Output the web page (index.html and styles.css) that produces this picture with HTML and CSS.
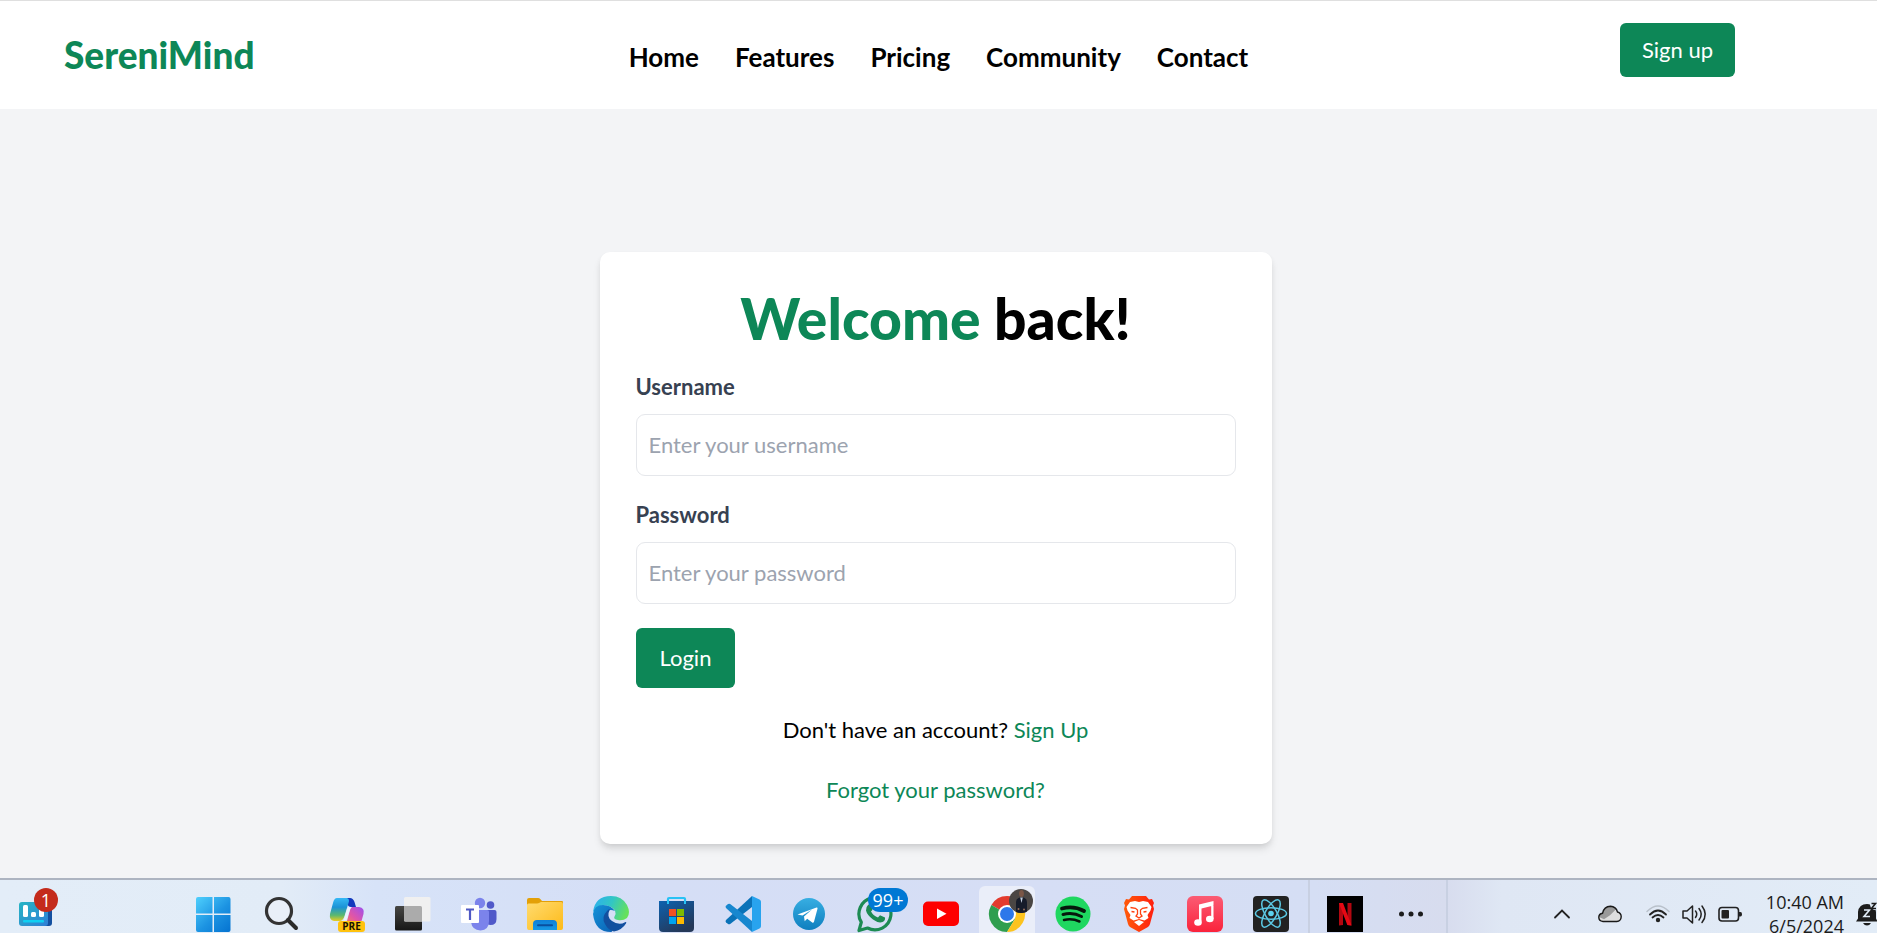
FILE: index.html
```html
<!DOCTYPE html>
<html lang="en">
<head>
<meta charset="utf-8">
<meta name="viewport" content="width=device-width, initial-scale=1">
<title>SereniMind</title>
<link rel="stylesheet" href="styles.css">
</head>
<body>
<header class="header">
  <a class="brand" href="#">SereniMind</a>
  <nav class="nav">
    <a href="#">Home</a>
    <a href="#">Features</a>
    <a href="#">Pricing</a>
    <a href="#">Community</a>
    <a href="#">Contact</a>
  </nav>
  <button class="btn btn-signup" type="button">Sign up</button>
</header>

<main class="main">
  <section class="card">
    <h1 class="title"><span class="accent">Welcome</span> back!</h1>
    <form class="form">
      <div class="field">
        <label for="username">Username</label>
        <input id="username" type="text" placeholder="Enter your username">
      </div>
      <div class="field">
        <label for="password">Password</label>
        <input id="password" type="password" placeholder="Enter your password">
      </div>
      <button class="btn btn-login" type="button">Login</button>
    </form>
    <p class="note">Don't have an account? <a href="#">Sign Up</a></p>
    <p class="note"><a href="#">Forgot your password?</a></p>
  </section>
</main>

<footer class="taskbar">
  <div class="widgets">
    <span class="icon-wrap">
      <svg width="36" height="36" viewBox="0 0 36 36">
        <defs><linearGradient id="wg" x1="0" y1="0" x2="1" y2="1"><stop offset="0" stop-color="#27b5c4"/><stop offset="1" stop-color="#2f7fd6"/></linearGradient></defs>
        <rect x="22" y="6" width="12" height="24" rx="3" fill="#1450a0"/>
        <rect x="1" y="6" width="29" height="24" rx="3" fill="url(#wg)"/>
        <rect x="5" y="9" width="5" height="12" rx="1.5" fill="#fff"/><rect x="13" y="16" width="5" height="5" rx="1.5" fill="#fff"/><rect x="21" y="11" width="5" height="10" rx="1.5" fill="#fff"/>
        <rect x="5" y="24" width="21" height="2.4" rx="1" fill="#0fd0f2"/>
      </svg>
      <span class="badge badge-red">1</span>
    </span>
  </div>

  <ul class="apps">
    <li><svg width="36" height="36" viewBox="0 0 36 36">
      <defs><linearGradient id="win" gradientUnits="userSpaceOnUse" x1="0" y1="0" x2="34" y2="36"><stop offset="0" stop-color="#4fd0fd"/><stop offset=".55" stop-color="#1c93e2"/><stop offset="1" stop-color="#0472d0"/></linearGradient></defs>
      <path fill="url(#win)" d="M1 1h14.5v16.500H-1V3Q-1 1 1 1zM17 1h14.500q2 0 2 2v14.500H17zM-1 19h16.500v17H1q-2 0-2-2zM17 19h16.500v15q0 2-2 2H17z"/></svg></li>
    <li><svg width="36" height="36" viewBox="0 0 36 36"><circle cx="16" cy="15" r="12.500" fill="#e9eff8" stroke="#333" stroke-width="3.200"/><path d="M25 24l8 8" stroke="#2a2a2a" stroke-width="4" stroke-linecap="round"/></svg></li>
    <li><span class="icon-wrap"><svg width="36" height="36" viewBox="0 0 36 36">
      <defs>
        <linearGradient id="cp1" x1="0" y1="0" x2="0" y2="1"><stop offset="0" stop-color="#35b8f5"/><stop offset=".4" stop-color="#1b93d6"/><stop offset=".75" stop-color="#5bb870"/><stop offset="1" stop-color="#e9cc22"/></linearGradient>
        <linearGradient id="cp2" x1="1" y1="0" x2="0" y2="1"><stop offset="0" stop-color="#9b50f0"/><stop offset=".5" stop-color="#e055a8"/><stop offset="1" stop-color="#fb8a4a"/></linearGradient>
      </defs>
      <path d="M16 2h5q3 0 4.500 4l1.500 5h-5q-3 0-4-4z" fill="#1239bd"/>
      <path d="M8 2h10q3 1 1.500 5l-4 13q-1.500 5-5 5H5q-5-1-4-7L4 7q1.200-5 4-5z" fill="url(#cp1)"/>
      <path d="M22 11h8q6 1 4.500 7l-2 7q-1 4-5 5H14q3-1 4-5l3-11q.500-3 1-3z" fill="url(#cp2)"/>
      <path d="M18 13q1-2 3-2h2q-1.500 1-2.500 4l-3 9-3 1z" fill="#edf3ff"/></svg><span class="pre">PRE</span></span></li>
    <li><svg width="36" height="36" viewBox="0 0 36 36">
      <defs><linearGradient id="tv" x1="0" y1="0" x2="0" y2="1"><stop offset="0" stop-color="#464644"/><stop offset="1" stop-color="#171717"/></linearGradient></defs>
      <rect x="0" y="10" width="27" height="24.500" rx="1.500" fill="url(#tv)"/><rect x="9" y="1" width="26.500" height="24.500" rx="1.500" fill="#f0f0f0"/><path d="M9 10h16.500q1.500 0 1.500 1.500v14H10.500Q9 25.500 9 24z" fill="#ababab"/></svg></li>
    <li><svg width="36" height="36" viewBox="0 0 36 36">
      <circle cx="29.500" cy="9" r="3.800" fill="#5059c9"/><path d="M26 14h7.500q2 0 2 2v7q0 6-6 6-3.500 0-5-3z" fill="#5059c9"/>
      <circle cx="19" cy="7" r="5.200" fill="#7b83eb"/><path d="M10 14h16q2 0 2 2v9q0 9-8.500 9.500Q11 34 10 26z" fill="#7b83eb"/>
      <rect x="0" y="9" width="18" height="18" rx="1" fill="#fff"/><path d="M5 13.500h8M9 13.500V24" stroke="#4f58c4" stroke-width="2.200"/></svg></li>
    <li><svg width="36" height="36" viewBox="0 0 36 36">
      <defs><linearGradient id="fo" x1="0" y1="0" x2="1" y2="1"><stop offset="0" stop-color="#ffdb70"/><stop offset="1" stop-color="#fdba18"/></linearGradient><linearGradient id="fb" x1="0" y1="0" x2="0" y2="1"><stop offset="0" stop-color="#0f7fd7"/><stop offset="1" stop-color="#1698e4"/></linearGradient></defs>
      <path d="M0 4q0-2 2-2h9q1.500 0 2.500 1.200L15 5h20q1 0 1 1v8H0z" fill="#e3a008"/>
      <path d="M0 9q0-1.500 1.500-1.500H10q1.500 0 2.500-.800L14 6h20q2 0 2 2v24q0 2-2 2H2q-2 0-2-2z" fill="url(#fo)"/>
      <path d="M6 34v-6q0-4 4-4h16q4 0 4 4v6z" fill="url(#fb)"/><path d="M11 29.200h14" stroke="#0a4f9e" stroke-width="2" stroke-linecap="round"/></svg></li>
    <li><svg width="36" height="36" viewBox="0 0 36 36">
      <defs><linearGradient id="e1" x1="0" y1=".2" x2="1" y2=".5"><stop offset="0" stop-color="#2cb0ee"/><stop offset=".5" stop-color="#32c6c4"/><stop offset="1" stop-color="#66e15a"/></linearGradient>
      <linearGradient id="e2" x1="0" y1="0" x2="1" y2="1"><stop offset="0" stop-color="#1593d8"/><stop offset="1" stop-color="#0a5fb4"/></linearGradient></defs>
      <path d="M0 16Q2 0 18 0q11 0 16 9 4 8 0 13-4 3-9 2-5-1-3.500-3.500Q25 15 18 11 8 6 0 16z" fill="url(#e1)"/>
      <path d="M0 18Q1 9 10 9q8 0 12 6-7-3-9 3-2 9 6 15 1 3-1 3Q2 36 0 18z" fill="url(#e2)"/>
      <path d="M14 15q-6 6-2 13 3 6 9 7.500 8-1.500 12-8 1-2-1-1.200Q26 30 19 25q-6-4-2-12-2 .500-3 2z" fill="#124f9f"/></svg></li>
    <li><svg width="36" height="36" viewBox="0 0 36 36">
      <defs><linearGradient id="st" x1="0" y1="0" x2=".6" y2="1"><stop offset="0" stop-color="#0d62b0"/><stop offset="1" stop-color="#253858"/></linearGradient></defs>
      <path d="M9 7V3q0-1 1-1h15q1 0 1 1v4" fill="none" stroke="#28c2f5" stroke-width="2.200"/>
      <path d="M0 5h35v27q0 4-4 4H4q-4 0-4-4z" fill="url(#st)"/><path d="M9 5v3M26 5v3" stroke="#28c2f5" stroke-width="2"/>
      <path fill="#f25022" d="M10 13h7v7h-7z"/><path fill="#7fba00" d="M18 13h7v7h-7z"/><path fill="#00a4ef" d="M10 21h7v7h-7z"/><path fill="#ffb900" d="M18 21h7v7h-7z"/></svg></li>
    <li><svg width="36" height="36" viewBox="0 0 36 36">
      <path d="M27 0L1 24q-1 1.200 0 2.200l2 1.800q1.200.600 2.200 0L27 11z" fill="#0a72b8"/>
      <path d="M27 36L1 12q-1-1.200 0-2.200L3 8q1.200-.600 2.200 0L27 25z" fill="#1787cf"/>
      <path d="M27 0l7.500 3.500q1.500.700 1.500 2.300v24.400q0 1.600-1.500 2.300L27 36z" fill="#28a3ee"/></svg></li>
    <li><svg width="36" height="36" viewBox="0 0 36 36">
      <defs><linearGradient id="tg" x1="0" y1="0" x2="0" y2="1"><stop offset="0" stop-color="#37aee2"/><stop offset="1" stop-color="#0f7fbf"/></linearGradient></defs>
      <circle cx="18" cy="18" r="16" fill="url(#tg)"/><path d="M6.500 18.500l19-7q1.300-.300 1 1.200l-3.500 13q-.600 1.500-1.800.700l-5-3.700-2.500 2.600-.700-4.700 8-7-9.500 5.800z" fill="#fff"/></svg></li>
    <li><span class="icon-wrap"><svg width="36" height="36" viewBox="0 0 36 36">
      <path d="M2 34.500l2.300-8.300A16 16 0 1 1 10.500 32z" fill="none" stroke="#1d8b53" stroke-width="3.200" stroke-linejoin="round"/>
      <path d="M11 9q1-1 2.500-.500l2 4.500q0 1-1.500 2.500 2.500 4.500 7 6l2-2.300 5 2.300q.500 3-2.500 4.500-4 1.500-9.500-2.500-6-4.500-7-9-.300-3.500 2-5.500z" fill="#1d8b53"/></svg><span class="badge badge-blue">99+</span></span></li>
    <li><svg width="36" height="36" viewBox="0 0 36 36"><rect x="0" y="5.500" width="36" height="24.500" rx="5" fill="#fe0000"/><path d="M14 12.500l9.500 5.300-9.500 5.300z" fill="#fff"/></svg></li>
    <li><span class="tile"><span class="icon-wrap"><svg width="36" height="36" viewBox="0 0 36 36">
      <path d="M18 18L2.400 9A18 18 0 0 1 33.600 9z" fill="#e33b2e"/><path d="M18 18L2.400 9A18 18 0 0 0 18 36l8-13z" fill="#2f9e4f"/><path d="M18 9h15.600A18 18 0 0 1 18 36l8-13z" fill="#fcc31e"/>
      <circle cx="18" cy="18" r="9" fill="#fff"/><circle cx="18" cy="18" r="7" fill="#2c78ea"/></svg>
      <svg class="avatar" width="24" height="24" viewBox="0 0 24 24"><defs><clipPath id="av"><circle cx="12" cy="12" r="12"/></clipPath></defs><g clip-path="url(#av)"><path fill="#4a4644" d="M0 0h24v24H0z"/><path d="M7 24V13q0-3 2.500-4l3-1 3 1q2.500 1 2.500 4v11z" fill="#161c2a"/><ellipse cx="12.500" cy="4.500" rx="2.400" ry="3.600" fill="#7a5646"/><path d="M11.200 8.500l1.300 5.500 1.300-5.500z" fill="#c3cfe0"/><circle cx="9.500" cy="20" r="1" fill="#96705f"/><circle cx="15" cy="20.500" r="1" fill="#96705f"/></g></svg></span></span></li>
    <li><svg width="36" height="36" viewBox="0 0 36 36"><circle cx="18" cy="18" r="17.500" fill="#1fd760"/><g fill="none" stroke="#06170c" stroke-linecap="round"><path d="M7 12.500q12-3 22 2.500" stroke-width="3.800"/><path d="M8 18.500q10-2.500 18.500 2" stroke-width="3"/><path d="M9 24q8-2 15.500 1.500" stroke-width="2.500"/></g></svg></li>
    <li><svg width="36" height="36" viewBox="0 0 36 36">
      <defs><linearGradient id="br"><stop offset="0" stop-color="#ff5a0a"/><stop offset="1" stop-color="#ff2010"/></linearGradient></defs>
      <path d="M11 0h14l3 3.500 3-.500 2 4-1 2.500 1 3.500-4 15q-.600 2-2 3L18 36l-9-5q-1.400-1-2-3L3 13l1-3.500L3 7l2-4 3 .500z" fill="url(#br)"/>
      <path d="M18 6l4-1 5 1 3.500 5-1 3.500-3 4.500 1 3-4 2.500-5.500-1.500-5.500 1.500-4-2.500 1-3-3-4.500-1-3.500L9 6l5-1z" fill="#fff"/>
      <path d="M13 26l5-2 5 2-5 4z" fill="#fff"/>
      <path d="M9.500 11.500l5 .800L16.500 14v4l-1.500 2 3 2 3-2-1.500-2v-4l2-1.700 5-.800M10.500 15.500l3 .5M25.500 15.500l-3 .5" fill="none" stroke="#ff4010" stroke-width="1.300"/></svg></li>
    <li><svg width="36" height="36" viewBox="0 0 36 36">
      <defs><linearGradient id="mu" x1="0" y1="0" x2="0" y2="1"><stop offset="0" stop-color="#fb5c74"/><stop offset="1" stop-color="#fa233b"/></linearGradient></defs>
      <rect width="36" height="36" rx="6" fill="url(#mu)"/><path d="M12 8.500L26.500 5v4.500L14.500 12.500v13H12zM24.200 7h2.300v16h-2.300z" fill="#fff"/><ellipse cx="11" cy="26.500" rx="3.800" ry="3.200" fill="#fff"/><ellipse cx="22.800" cy="23" rx="3.800" ry="3.200" fill="#fff"/></svg></li>
    <li><svg width="36" height="36" viewBox="0 0 36 36"><rect width="36" height="36" rx="4" fill="#222"/><g fill="none" stroke="#5cc9e4" stroke-width="1.500"><ellipse cx="18" cy="17.500" rx="15.500" ry="5.800"/><ellipse cx="18" cy="17.500" rx="15.500" ry="5.800" transform="rotate(60 18 17.500)"/><ellipse cx="18" cy="17.500" rx="15.500" ry="5.800" transform="rotate(120 18 17.500)"/></g><circle cx="18" cy="17.500" r="2.800" fill="#5cd3ee"/></svg></li>
  </ul>
  <ul class="apps apps-extra">
    <li><svg width="36" height="36" viewBox="0 0 36 36"><path d="M0 0h36v36H0z"/><path d="M12 7h4v22l-4 .500zM20.500 7h4v22.500l-4-.500z" fill="#b20710"/><path d="M12 7h4l8.500 22.500-4.200-.500z" fill="#e50914"/></svg></li>
    <li><svg width="36" height="36" viewBox="0 0 36 36"><g fill="#1c1c1c"><circle cx="8.500" cy="18" r="2.500"/><circle cx="18" cy="18" r="2.500"/><circle cx="27.500" cy="18" r="2.500"/></g></svg></li>
  </ul>

  <div class="tray">
    <svg class="chevron" width="24" height="24" viewBox="0 0 24 24"><path d="M5 15.500l7-7 7 7" fill="none" stroke="#222" stroke-width="1.800" stroke-linecap="round"/></svg>
    <svg class="cloud" width="24" height="24" viewBox="0 0 24 24"><path d="M5 19.500Q.800 19 .800 15.300.800 12 4.500 11.300 6 4.500 12.500 4.300q5.500.200 7 5.700 3.700 1 3.700 4.700-.200 4.300-4.500 4.800z" fill="#dedede"/><path d="M1 15q0-3 3.500-3.700Q6 4.500 12.500 4.300q3.500 0 5.500 3l-6 6-6 4z" fill="#9a9a9a"/><path d="M5 19.500Q.800 19 .800 15.300.800 12 4.500 11.300 6 4.500 12.500 4.300q5.500.200 7 5.700 3.700 1 3.700 4.700-.200 4.300-4.500 4.800z" fill="none" stroke="#191919" stroke-width="1.400"/></svg>
    <div class="status">
      <svg width="24" height="24" viewBox="0 0 24 24"><g fill="none" stroke-linecap="round"><path d="M1 9.500q11-11 22 0" stroke="#b9c1cb" stroke-width="1.500"/><path d="M4 12.500q8-8 16 0M6.500 15.500q5.500-5 11 0" stroke="#222" stroke-width="1.800"/></g><circle cx="12" cy="18" r="2.200" fill="#222"/></svg>
      <svg width="24" height="24" viewBox="0 0 24 24"><path d="M1 9h4l5.500-5v17L5 16H1zM13.500 9q2.500 3 0 6.500M17 6.500q4.500 6 0 11.500M20 4q6.500 8.500 0 16.500" fill="none" stroke="#222" stroke-width="1.500" stroke-linecap="round" stroke-linejoin="round"/></svg>
      <svg width="24" height="24" viewBox="0 0 24 24"><rect x="1" y="5.500" width="19.500" height="13.500" rx="3" fill="none" stroke="#222" stroke-width="1.600"/><rect x="3.500" y="8" width="7.500" height="8.500" rx="1" fill="#222"/><path d="M21 10h1.500q1.500 0 1.500 2.300t-1.500 2.300H21z" fill="#222"/></svg>
    </div>
    <div class="clock"><time>10:40 AM</time><time>6/5/2024</time></div>
    <svg class="bell" width="24" height="24" viewBox="0 0 24 24"><path d="M2 16.500V10q1-8 9-8 8 0 9 8v6.500l1.500 3H0z" fill="#1c1c1c"/><path d="M7 21h8q-1.500 2.500-4 2.500T7 21z" fill="#1c1c1c"/><path d="M8 8h5.500L8 14.500h6" fill="none" stroke="#e2ecf7" stroke-width="1.600"/><path d="M13 0h11v8h-6l-3-2z" fill="#e2ecf7"/><path d="M15.500 1.500h4l-4 5h4.500" fill="none" stroke="#1c1c1c" stroke-width="1.600"/></svg>
  </div>
</footer>
</body>
</html>
```

FILE: styles.css
```css
* {
  box-sizing: border-box;
}

body {
  margin: 0;
  height: 100vh;
  display: flex;
  flex-direction: column;
  overflow: hidden;
  background: #f3f4f6;
  color: #000;
  font-family: Lato, "Liberation Sans", sans-serif;
  font-size: 22px;
  line-height: 36px;
}

a {
  color: inherit;
  text-decoration: none;
}

.header {
  display: grid;
  grid-template-columns: 1fr auto 1fr;
  align-items: center;
  flex: none;
  min-height: 109px;
  padding: 0 64px;
  border-top: 1px solid #dfdfdf;
  background: #fff;
}

.brand {
  color: #0d8757;
  font-size: 37px;
  font-weight: 900;
  line-height: 48px;
}

.nav {
  display: flex;
  gap: 36px;
  padding-top: 3px;
  font-size: 26px;
  font-weight: 700;
}

.btn {
  border: 0;
  border-radius: 6px;
  background: #0d8757;
  color: #fff;
  font: inherit;
}

.btn-signup {
  justify-self: end;
  margin: 0 78px 10px 0;
  padding: 9px 22px;
}

.main {
  flex: 1;
  min-height: 0;
  padding: 143px 6px 0 0;
}

.card {
  width: 100%;
  max-width: 672px;
  margin: 0 auto;
  padding: 36px;
  border-radius: 10px;
  background: #fff;
  box-shadow: 0 6px 9px -1px rgba(0, 0, 0, 0.1), 0 3px 6px -2px rgba(0, 0, 0, 0.1);
}

.title {
  margin: 0 0 24px;
  font-size: 57px;
  font-weight: 900;
  line-height: 60px;
  text-align: center;
}

.accent {
  color: #0d8757;
}

.form {
  display: flex;
  flex-direction: column;
  align-items: flex-start;
  gap: 24px;
}

.field {
  display: flex;
  flex-direction: column;
  gap: 12px;
  width: 100%;
}

.field label {
  color: #374151;
  font-weight: 700;
  line-height: 30px;
}

.field input {
  width: 100%;
  height: 62px;
  padding: 10px 12px 12px;
  border: 1px solid #e5e7eb;
  border-radius: 9px;
  background: #fff;
  color: #000;
  font: inherit;
}

.field input::placeholder {
  color: #9ca3af;
}

.btn-login {
  padding: 12px 24px;
}

.note {
  margin: 24px 0 0;
  text-align: center;
}

.note a {
  color: #0d8757;
}

.taskbar {
  display: flex;
  align-items: flex-start;
  flex: none;
  height: 55px;
  overflow: hidden;
  border-top: 2px solid #adb4c1;
  background: linear-gradient(90deg, #e3edf8 0, #e2ecf7 15%, #d7e3f8 20%, #d5def6 35%, #d6def5 55%, #d5def4 70%, #d7dcee 77%, #dfe7f4 80%, #e2ecf7 100%);
  font-family: "Open Sans", "Noto Sans", sans-serif;
  font-size: 18px;
  line-height: 24px;
}

.taskbar svg {
  display: block;
  flex: none;
  overflow: visible;
}

.widgets {
  display: flex;
  align-items: center;
  flex: none;
  width: 182px;
  height: 68px;
  padding-left: 18px;
}

.icon-wrap {
  position: relative;
  display: block;
}

.badge {
  position: absolute;
  top: -8px;
  height: 24px;
  border-radius: 12px;
  color: #fff;
  text-align: center;
}

.badge-red {
  left: 16px;
  width: 24px;
  background: #c42b1c;
}

.badge-blue {
  left: 11px;
  width: 40px;
  background: #0078d4;
}

.pre {
  position: absolute;
  top: 25px;
  left: 9px;
  width: 27px;
  border-radius: 3px;
  background: #ffc20e;
  color: #1c1400;
  font-size: 10px;
  font-weight: 700;
  line-height: 11px;
  text-align: center;
}

.apps {
  display: flex;
  flex: none;
  margin: 0;
  padding: 0;
  list-style: none;
}

.apps li {
  display: flex;
  align-items: center;
  justify-content: center;
  width: 66px;
  height: 68px;
}

.apps-extra {
  margin-left: 4px;
  padding: 0 2px;
  border: solid #c8d0e2;
  border-width: 0 2px;
}

.tile {
  display: flex;
  align-items: center;
  justify-content: center;
  width: 56px;
  height: 56px;
  border-radius: 6px;
  background: #eaeef9;
}

.avatar {
  position: absolute;
  top: -7px;
  left: 20px;
}

.tray {
  display: flex;
  align-items: center;
  height: 68px;
  margin-left: auto;
  margin-right: -3px;
  color: #1c1c1c;
}

.chevron,
.cloud {
  margin-right: 24px;
}

.status {
  display: flex;
  gap: 12px;
}

.clock {
  display: flex;
  flex-direction: column;
  align-items: flex-end;
  width: 102px;
}

.bell {
  margin-left: 12px;
}
```
